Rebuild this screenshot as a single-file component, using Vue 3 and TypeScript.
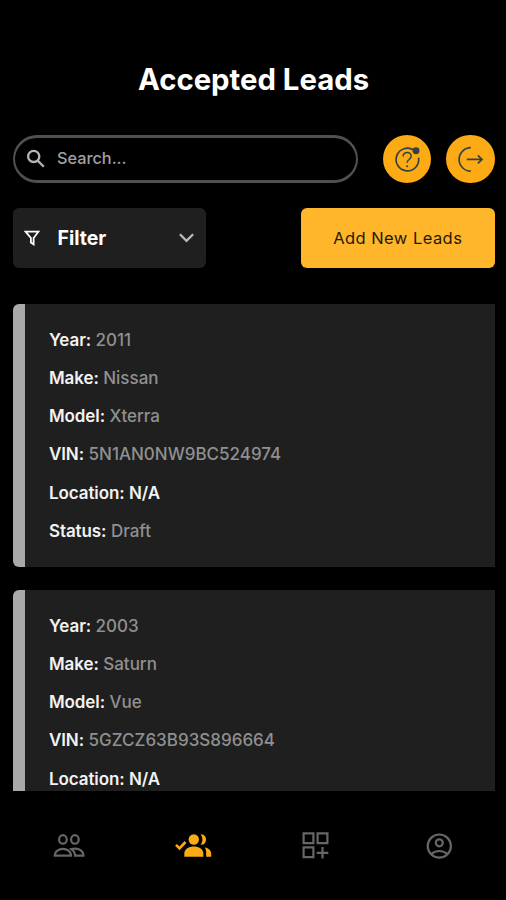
<script setup lang="ts">
interface Field {
  label: string
  value: string
  strong?: boolean
}

interface Lead {
  id: number
  fields: Field[]
}

const makeLead = (id: number, year: string, make: string, model: string, vin: string): Lead => ({
  id,
  fields: [
    { label: 'Year', value: year },
    { label: 'Make', value: make },
    { label: 'Model', value: model },
    { label: 'VIN', value: vin },
    { label: 'Location', value: 'N/A', strong: true },
  ],
})

const first = makeLead(1, '2011', 'Nissan', 'Xterra', '5N1AN0NW9BC524974')
first.fields.push({ label: 'Status', value: 'Draft' })

const leads: Lead[] = [first, makeLead(2, '2003', 'Saturn', 'Vue', '5GZCZ63B93S896664')]
</script>

<template>
  <div class="screen">
    <h1 class="title"><span>Accepted Leads</span></h1>

    <div class="search-row">
      <label class="search">
        <svg class="search-icon" viewBox="0 0 20 20">
          <circle cx="7.7" cy="7.4" r="5.6" />
          <path d="M11.7 11.6 17.8 17.7" />
        </svg>
        <span class="search-text">Search...</span>
      </label>
      <div class="actions">
        <button class="round" aria-label="Help">
          <svg viewBox="0 0 48 48">
            <path d="M30.6 15.1A11.2 11.2 0 1 0 35.2 22.4" />
            <path class="thin" d="M19.9 21.3c.1-5.6 8.3-5.1 8 0-.2 2.8-4 2.8-4 6.2" />
            <circle class="dot" cx="23.9" cy="31" r="1" />
            <circle class="dot" cx="32.7" cy="15.6" r="3.4" />
          </svg>
        </button>
        <button class="round" aria-label="Log out">
          <svg viewBox="0 0 48 48">
            <path d="M24.6 12.6a11.6 11.6 0 0 0 0 23.2" />
            <path d="M20.6 24.2h15M31.5 20.2l4.2 4-4.2 4" />
          </svg>
        </button>
      </div>
    </div>

    <div class="tools">
      <button class="filter">
        <svg class="funnel" viewBox="0 0 16 16">
          <path d="M1.6 1.7h12.8L9.6 8v6.4L6.9 12.6V8z" />
        </svg>
        <span class="filter-text">Filter</span>
        <svg class="chevron" viewBox="0 0 18 12">
          <path d="M2 2l7 7 7-7" />
        </svg>
      </button>
      <button class="add"><span>Add New Leads</span></button>
    </div>

    <main class="list">
      <article v-for="lead in leads" :key="lead.id" class="card">
        <p v-for="field in lead.fields" :key="field.label" class="field">
          <span class="label">{{ field.label }}:</span>
          <span class="value" :class="{ strong: field.strong }">{{ field.value }}</span>
        </p>
      </article>
    </main>

    <nav class="tabs">
      <a class="tab">
        <svg viewBox="0 0 36 30">
          <ellipse cx="11.9" cy="8.4" rx="3.8" ry="4.3" />
          <ellipse cx="23.9" cy="8.4" rx="3.8" ry="4.3" />
          <path d="M3.8 24.7c0-9.2 16.2-9.2 16.2 0z" />
          <path d="M20.4 18.1c5.2-1.6 11.9.6 12 6.6H24c0-3-1.2-5-3.6-6.6z" />
        </svg>
      </a>
      <a class="tab active">
        <svg viewBox="0 0 36 30">
          <circle cx="19.8" cy="8.5" r="5.2" />
          <path d="M26.6 3.2c7.3-.6 7.3 11.2 0 10.6 2.4-3 2.4-7.6 0-10.6z" />
          <path d="M10.3 25.7v-3.3c0-9.2 19-9.2 19 0v3.3z" />
          <path d="M30.8 16.4c4 .8 6.4 3 6.4 6v3.3h-5v-3.3c0-2.4-.4-4.2-1.4-6z" />
          <path class="check" d="M2 13.9l3.5 3.5 6-6.4" />
        </svg>
      </a>
      <a class="tab">
        <svg viewBox="0 0 36 30">
          <path d="M6.6 2.3h9.8v9.8H6.6zM20.6 2.3h9.8v9.8h-9.8zM6.6 16.3h9.8v9.8H6.6zM25.5 16v11.6M19.7 21.8h11.6" />
        </svg>
      </a>
      <a class="tab">
        <svg viewBox="0 0 36 30">
          <circle cx="18.3" cy="15.1" r="11.6" />
          <circle cx="18.3" cy="11.8" r="3.5" />
          <path d="M10 23.2c4.6-4.3 12-4.3 16.6 0" />
        </svg>
      </a>
    </nav>
  </div>
</template>

<style>
body {
  background: #000;
}
</style>

<style scoped>
.screen {
  display: flex;
  flex-direction: column;
  box-sizing: border-box;
  width: 506px;
  height: 900px;
  padding: 60px 11.5px 0 12.5px;
  overflow: hidden;
  background: #000;
  color: #fff;
  font-family: Inter, sans-serif;
}

button {
  border: 0;
  margin: 0;
  padding: 0;
  font: inherit;
}

svg {
  display: block;
  fill: none;
  stroke: currentColor;
}

.title {
  margin: 0;
  height: 74.5px;
  font-size: 29.3px;
  font-weight: 700;
  line-height: 40px;
  text-align: center;
}

.search-row {
  display: flex;
  justify-content: space-between;
  height: 48.5px;
}

.search {
  display: flex;
  align-items: center;
  box-sizing: border-box;
  width: 345px;
  padding-left: 11px;
  border: 2.5px solid #505050;
  border-width: 3px 2.5px;
  border-radius: 25px;
}

.search-icon {
  width: 20px;
  height: 20px;
  color: #b5b5b5;
  stroke-width: 2.3;
}

.search-text {
  margin: -1px 0 0 11.5px;
  color: #a0a0a0;
  font-size: 16.3px;
  font-weight: 500;
}

.actions {
  display: flex;
  gap: 15px;
}

.round {
  width: 48.5px;
  height: 48.5px;
  border-radius: 50%;
  background: #fdab14;
  color: #344247;
}

.round svg {
  width: 48.5px;
  height: 48.5px;
  stroke-width: 1.7;
}

.round .thin {
  stroke-width: 1.5;
}

.round .dot {
  fill: currentColor;
  stroke: none;
}

.tools {
  display: flex;
  justify-content: space-between;
  height: 60px;
  margin-top: 24.5px;
}

.filter {
  display: flex;
  align-items: center;
  width: 193.5px;
  padding: 0 11px;
  border-radius: 6px;
  background: #1f1f1f;
  color: #fff;
}

.funnel {
  width: 16px;
  height: 16px;
  stroke-width: 1.8;
}

.filter-text {
  margin-left: 18px;
  font-size: 19.5px;
  font-weight: 700;
}

.chevron {
  width: 17px;
  height: 12px;
  margin-left: auto;
  color: #bbb;
  stroke-width: 2.4;
}

.add {
  width: 193.5px;
  border-radius: 6px;
  background: #ffb62b;
  color: #241a06;
  font-size: 16.5px;
  letter-spacing: 0.45px;
}

.list {
  display: flex;
  flex-direction: column;
  gap: 23.5px;
  height: 487px;
  margin-top: 36.5px;
  overflow: hidden;
}

.card {
  flex: none;
  box-sizing: border-box;
  height: 262.5px;
  padding: 16.5px 0 0 24.5px;
  border-left: 12.5px solid #a9a9a9;
  border-radius: 6px 0 0 6px;
  background: #1f1f1f;
}

.field {
  display: flex;
  gap: 4.5px;
  margin: 0;
  font-size: 17px;
  line-height: 38.3px;
}

.label,
.strong {
  color: #f2f2f2;
  font-weight: 600;
  letter-spacing: -0.1px;
}

.value:not(.strong) {
  color: #909090;
  font-weight: 500;
}

.tabs {
  display: grid;
  grid-template-columns: repeat(4, 1fr);
  margin: 39.5px -6px 0 -5.5px;
}

.tab {
  display: flex;
  justify-content: center;
  color: #666;
}

.tab svg {
  width: 36px;
  height: 30px;
  overflow: visible;
  stroke-width: 2.2;
}

.active {
  color: #fdab14;
}

.active svg {
  fill: currentColor;
  stroke: none;
}

.active .check {
  fill: none;
  stroke: currentColor;
  stroke-width: 2.6;
}
</style>
